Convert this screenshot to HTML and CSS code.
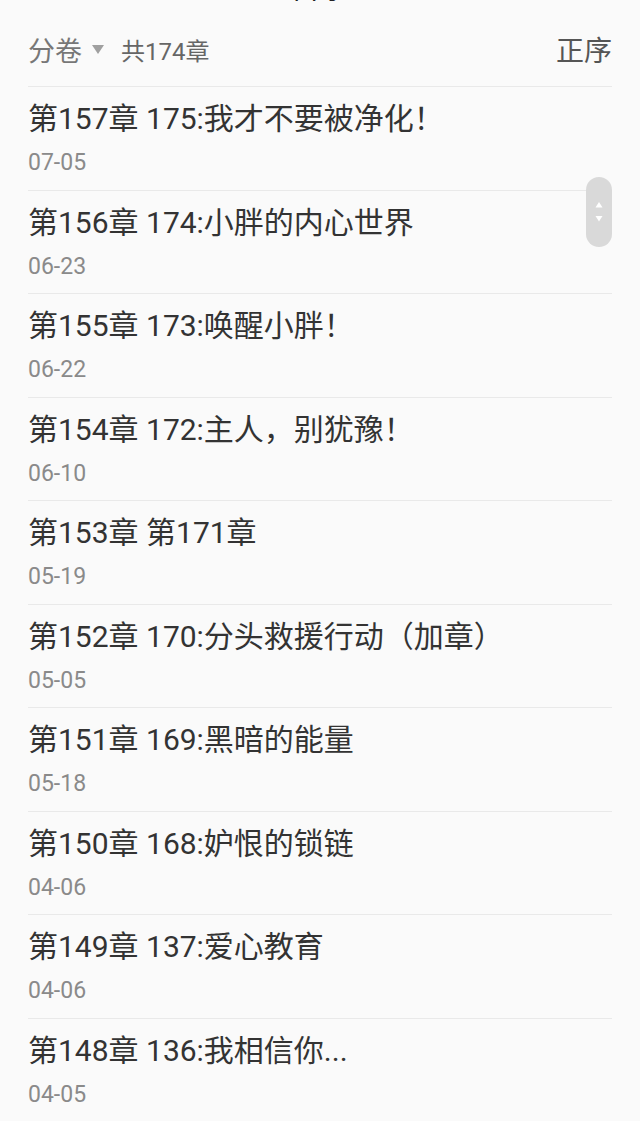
FILE: index.html
```html
<!DOCTYPE html>
<html lang="zh-CN">
<head>
    <meta charset="UTF-8">
    <meta name="viewport" content="width=device-width, initial-scale=1.0">
    <title>目录</title>
    <link rel="stylesheet" href="styles.css">
</head>
<body>

    <div class="catalog">
        <div class="catalog-title">目录</div>

        <div class="toolbar">
            <div class="volume-picker">
                <span class="volume-label">分卷</span>
                <span class="volume-arrow"></span>
                <span class="chapter-count">共174章</span>
            </div>
            <span class="sort-order">正序</span>
        </div>

        <ul class="chapter-list">
            <li class="chapter">
                <div class="chapter-title">第157章 175:我才不要被净化！</div>
                <div class="chapter-date">07-05</div>
            </li>
            <li class="chapter">
                <div class="chapter-title">第156章 174:小胖的内心世界</div>
                <div class="chapter-date">06-23</div>
            </li>
            <li class="chapter">
                <div class="chapter-title">第155章 173:唤醒小胖！</div>
                <div class="chapter-date">06-22</div>
            </li>
            <li class="chapter">
                <div class="chapter-title">第154章 172:主人，别犹豫！</div>
                <div class="chapter-date">06-10</div>
            </li>
            <li class="chapter">
                <div class="chapter-title">第153章 第171章</div>
                <div class="chapter-date">05-19</div>
            </li>
            <li class="chapter">
                <div class="chapter-title">第152章 170:分头救援行动（加章）</div>
                <div class="chapter-date">05-05</div>
            </li>
            <li class="chapter">
                <div class="chapter-title">第151章 169:黑暗的能量</div>
                <div class="chapter-date">05-18</div>
            </li>
            <li class="chapter">
                <div class="chapter-title">第150章 168:妒恨的锁链</div>
                <div class="chapter-date">04-06</div>
            </li>
            <li class="chapter">
                <div class="chapter-title">第149章 137:爱心教育</div>
                <div class="chapter-date">04-06</div>
            </li>
            <li class="chapter">
                <div class="chapter-title">第148章 136:我相信你...</div>
                <div class="chapter-date">04-05</div>
            </li>
        </ul>

        <!-- fast scroll handle -->
        <div class="scroll-thumb">
            <svg width="8" height="20" viewBox="0 0 8 20">
                <path d="M4 0 L7.5 5.5 L0.5 5.5 Z" fill="#fff"/>
                <path d="M0.5 14 L7.5 14 L4 19.5 Z" fill="#fff"/>
            </svg>
        </div>
    </div>

</body>
</html>
```

FILE: styles.css
```css
body {
    font-family: Roboto, "Noto Sans CJK SC", sans-serif;
    background-color: #ffffff;
    margin: 0;
    padding: 0;
    overflow: hidden;
}

.catalog {
    display: flow-root;
    position: relative;
    background-color: #fafafa;
    padding: 0 28px;
}

/* page title, mostly scrolled off the top */
.catalog-title {
    height: 40px;
    margin-top: -31px;
    line-height: 40px;
    font-size: 29px;
    color: #222;
    text-align: center;
}

.toolbar {
    display: flex;
    align-items: center;
    justify-content: space-between;
    height: 74px;
    padding-top: 3px;
}

.volume-picker {
    display: flex;
    align-items: center;
}

.volume-label {
    font-size: 27px;
    color: #777;
}

.volume-arrow {
    width: 0;
    height: 0;
    margin: 0 17px 0 10px;
    border-left: 6px solid transparent;
    border-right: 6px solid transparent;
    border-top: 9px solid #a0a0a0;
}

.chapter-count {
    font-size: 24px;
    color: #666;
}

.sort-order {
    font-size: 28px;
    color: #555;
}

.chapter-list {
    list-style: none;
    margin: 0;
    padding: 0;
}

.chapter {
    box-sizing: border-box;
    height: 103.5px;
    padding-top: 14px;
    border-top: 1px solid #e9e9e9;
}

.chapter-title {
    font-size: 30px;
    line-height: 36px;
    color: #333;
    white-space: nowrap;
}

.chapter-date {
    margin-top: 12px;
    font-size: 23px;
    line-height: 28px;
    color: #8a8a8a;
}

.scroll-thumb {
    position: absolute;
    top: 177px;
    right: 28px;
    width: 26px;
    height: 70px;
    border-radius: 13px;
    background-color: #d9d9d9;
    display: flex;
    align-items: center;
    justify-content: center;
}
```
